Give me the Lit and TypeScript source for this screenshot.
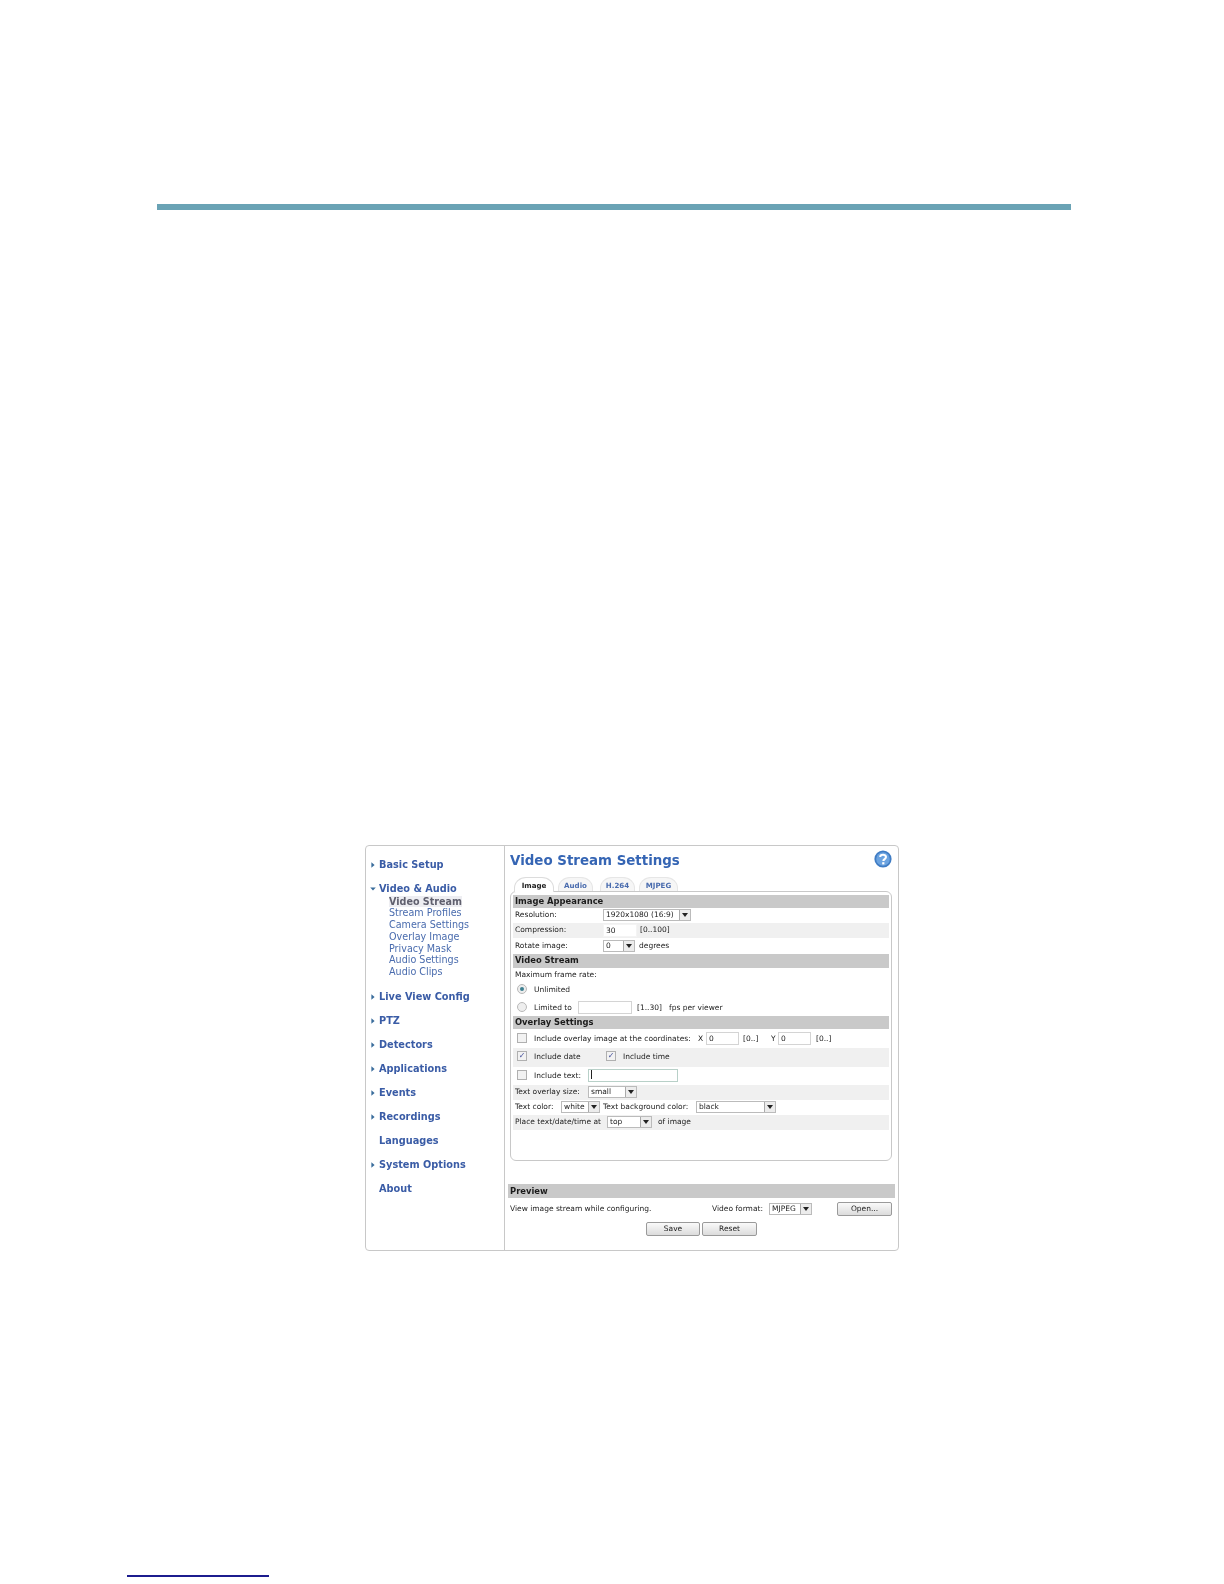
import { LitElement, html, css, nothing } from "lit";
import { customElement } from "lit/decorators.js";

@customElement("app-root")
export class AppRoot extends LitElement {
  static styles = css`
    :host { display: block; width: 1224px; height: 1584px; background: #fff; font-family: "DejaVu Sans", Verdana, sans-serif; color: #222; overflow: hidden; }
    .page { display: flex; flex-direction: column; padding-top: 204px; }
    .rule { width: 914px; height: 6px; margin-left: 157px; background: #6aa3b5; }
    .shot { width: 534px; height: 406px; box-sizing: border-box; margin: 635px 0 0 365px; border: 1px solid #c8c8c8; border-radius: 4px; display: flex; filter: blur(0.4px); }
    .foot { width: 142px; height: 1.5px; margin: 324px 0 0 127px; background: #1c1c8e; }

    .side { width: 138px; flex: none; border-right: 1px solid #c8c8c8; padding-top: 7px; display: flex; flex-direction: column; }
    .nav { height: 24px; flex: none; display: flex; align-items: center; font: bold 9.75px/14px "DejaVu Sans", sans-serif; color: #3a5ca6; padding-left: 5px; white-space: nowrap; }
    .ic { width: 8px; flex: none; display: flex; align-items: center; }
    .ar { fill: #3a6d9c; width: 4px; height: 6px; }
    .ard { fill: #3a6d9c; width: 6px; height: 4px; margin-left: -1px; flex: none; }
    .sub { display: flex; flex-direction: column; margin: -5.5px 0 6.5px 23px; }
    .sub div { height: 11.8px; font: 9.6px/12px "DejaVu Sans", sans-serif; color: #4a6cae; white-space: nowrap; width: fit-content; }
    .sub .on { color: #60606e; font-weight: bold; background: #eeeef2; }

    .main { flex: 1; min-width: 0; display: flex; flex-direction: column; }
    .head { height: 31px; display: flex; align-items: center; justify-content: space-between; padding: 0 6px 2px 5px; box-sizing: border-box; }
    h1 { margin: 0; font: bold 13.4px/18px "DejaVu Sans", sans-serif; color: #3565b4; }
    .help { width: 18px; height: 18px; margin-top: -3px; }
    .tabs { height: 14px; display: flex; padding-left: 9px; font: bold 7.1px/13px "DejaVu Sans", sans-serif; align-items: flex-end; }
    .tab { height: 14px; box-sizing: border-box; padding-top: 1px; border: 1px solid #e6e6e6; border-bottom: none; border-radius: 12px 12px 0 0 / 11px 11px 0 0; color: #4a6cae; background: #f6f6f6; text-align: center; flex: none; }
    .tab.on { color: #222; background: #fff; position: relative; z-index: 1; margin-bottom: -1px; height: 15px; border-color: #dcdcdc; }
    .box { width: 382px; height: 270px; margin-left: 5px; box-sizing: border-box; border: 1px solid #c8c8c8; border-radius: 6px; padding: 3px 2px 0; }
    .sec { background: #c9c9c9; font: bold 8.4px/13px "DejaVu Sans", sans-serif; color: #1c1c1c; padding-left: 2px; white-space: nowrap; }
    .row { display: flex; align-items: center; font: 7.5px/10px "DejaVu Sans", sans-serif; color: #222; padding-left: 2px; white-space: nowrap; box-sizing: border-box; }
    .g { background: #f0f0f0; }
    .t { flex: none; display: block; }
    .inp { height: 13px; box-sizing: border-box; border: 1px solid #d4d4d4; background: #fff; font: 7.5px/11px "DejaVu Sans", sans-serif; padding-left: 2px; color: #222; flex: none; }
    .inp.flat { border-color: #f4f4f4; }
    .caret { border-color: #b8d0c8; }
    .caret::before { content: ""; display: inline-block; width: 1px; height: 9px; background: #222; vertical-align: -1px; }
    .sel { height: 12px; box-sizing: border-box; border: 1px solid #bbb; background: #fff; display: flex; align-items: center; justify-content: space-between; font: 7.5px/10px "DejaVu Sans", sans-serif; padding-left: 2px; flex: none; color: #222; }
    .sel i { width: 10px; height: 10px; flex: none; border-left: 1px solid #aaa; background: #ececec; position: relative; }
    .sel i::after { content: ""; position: absolute; left: 2px; top: 3px; border: 3px solid transparent; border-top: 4px solid #222; border-bottom: none; }
    .cbw { width: 17px; flex: none; display: flex; margin-top: -2px; }
    .cb { width: 10px; height: 10px; box-sizing: border-box; border: 1px solid #b0b0b0; background: #f2f2f2; flex: none; font: 8px/8px "DejaVu Sans", sans-serif; color: #44509a; text-align: center; }
    .rd { width: 10px; height: 10px; box-sizing: border-box; border-radius: 50%; border: 1px solid #b8b8b8; background: #eee; flex: none; display: flex; align-items: center; justify-content: center; }
    .rd.on::after { content: ""; width: 4px; height: 4px; border-radius: 50%; background: #3e7f90; }
    .ind { padding-left: 4px; }
    .prev { margin: 23px 0 0 3px; width: 387px; }
    .prev .sec { height: 14px; line-height: 15px; padding-left: 2px; }
    .prow { height: 21px; display: flex; align-items: center; font: 7.5px/10px "DejaVu Sans", sans-serif; color: #222; padding: 1px 0 0 2px; box-sizing: border-box; white-space: nowrap; }
    .btn { height: 14px; box-sizing: border-box; border: 1px solid #9a9a9a; border-radius: 2px; background: linear-gradient(#fafafa, #dcdcdc); font: 7.5px/12px "DejaVu Sans", sans-serif; text-align: center; color: #222; flex: none; }
    .w54 { width: 54px; } .w55 { width: 55px; }
    .btns { display: flex; gap: 2px; margin: 3px 0 0 138px; }
  `;

  private nav(label: string, arrow: "r" | "d" | "" = "r") {
    const icon = arrow === "r"
      ? html`<svg class="ar" viewBox="0 0 5 7"><path d="M0.5 0 L4.5 3.5 L0.5 7Z" /></svg>`
      : arrow === "d"
        ? html`<svg class="ard" viewBox="0 0 7 5"><path d="M0 0.5 L7 0.5 L3.5 4.5Z" /></svg>`
        : nothing;
    return html`<div class="nav"><span class="ic">${icon}</span><span>${label}</span></div>`;
  }
  /* a text cell whose width reaches the start of the next item */
  private c(label: string, w: number) {
    return html`<span class="t" style="width:${w}px">${label}</span>`;
  }
  private sel(label: string, w: number) {
    return html`<span class="sel" style="width:${w}px">${label}<i></i></span>`;
  }
  private inp(label: string, w: number, cls = "") {
    return html`<span class="inp ${cls}" style="width:${w}px">${label}</span>`;
  }
  private cb(on = false) {
    return html`<span class="cbw"><span class="cb">${on ? "✓" : ""}</span></span>`;
  }
  private rd(on = false) {
    return html`<span class="cbw"><span class="rd ${on ? "on" : ""}"></span></span>`;
  }
  private h(px: number) {
    return `height:${px}px`;
  }

  render() {
    return html`<div class="page">
      <div class="rule"></div>
      <div class="shot">
        <div class="side">
          ${this.nav("Basic Setup")}
          ${this.nav("Video & Audio", "d")}
          <div class="sub">
            <div class="on">Video Stream</div>
            <div>Stream Profiles</div>
            <div>Camera Settings</div>
            <div>Overlay Image</div>
            <div>Privacy Mask</div>
            <div>Audio Settings</div>
            <div>Audio Clips</div>
          </div>
          ${this.nav("Live View Config")}
          ${this.nav("PTZ")}
          ${this.nav("Detectors")}
          ${this.nav("Applications")}
          ${this.nav("Events")}
          ${this.nav("Recordings")}
          ${this.nav("Languages", "")}
          ${this.nav("System Options")}
          ${this.nav("About", "")}
        </div>
        <div class="main">
          <div class="head">
            <h1>Video Stream Settings</h1>
            <svg class="help" viewBox="0 0 18 18">
              <circle cx="9" cy="9" r="8.6" fill="#3f7cc4" />
              <circle cx="9" cy="9" r="6.8" fill="#6ba3e0" />
              <path d="M6.2 7 C6.2 4.2 12 4 12 7.1 C12 9 9.3 9.2 9.3 11" fill="none" stroke="#fff" stroke-width="2" />
              <rect x="8.2" y="12.2" width="2.2" height="2.2" fill="#fff" />
            </svg>
          </div>
          <div class="tabs">
            <div class="tab on" style="width:40px;margin-right:4px">Image</div>
            <div class="tab" style="width:35px;margin-right:7px">Audio</div>
            <div class="tab" style="width:35px;margin-right:4px">H.264</div>
            <div class="tab" style="width:39px">MJPEG</div>
          </div>
          <div class="box">
            <div class="sec" style=${this.h(13)}>Image Appearance</div>
            <div class="row" style=${this.h(14.5)}>${this.c("Resolution:", 88)}${this.sel("1920x1080 (16:9)", 88)}</div>
            <div class="row g" style=${this.h(15.5)}>${this.c("Compression:", 88)}${this.inp("30", 34, "flat")}${this.c("", 3)}[0..100]</div>
            <div class="row" style=${this.h(16)}>${this.c("Rotate image:", 88)}${this.sel("0", 32)}${this.c("", 4)}degrees</div>
            <div class="sec" style=${this.h(14)}>Video Stream</div>
            <div class="row" style=${this.h(13)}>Maximum frame rate:</div>
            <div class="row ind" style=${this.h(18)}>${this.rd(true)}Unlimited</div>
            <div class="row ind" style=${this.h(17)}>${this.rd()}${this.c("Limited to", 44)}${this.inp("", 54)}${this.c("", 5)}${this.c("[1..30]", 32)}fps per viewer</div>
            <div class="sec" style=${this.h(13)}>Overlay Settings</div>
            <div class="row ind" style=${this.h(19)}>${this.cb()}${this.c("Include overlay image at the coordinates:", 164)}${this.c("X", 8)}${this.inp("0", 33)}${this.c("", 4)}${this.c("[0..]", 28)}${this.c("Y", 7)}${this.inp("0", 33)}${this.c("", 5)}[0..]</div>
            <div class="row ind g" style=${this.h(18.5)}>${this.cb(true)}${this.c("Include date", 72)}${this.cb(true)}Include time</div>
            <div class="row ind" style=${this.h(18)}>${this.cb()}${this.c("Include text:", 54)}${this.inp("", 90, "caret")}</div>
            <div class="row g" style=${this.h(15)}>${this.c("Text overlay size:", 73)}${this.sel("small", 49)}</div>
            <div class="row" style=${this.h(15)}>${this.c("Text color:", 46)}${this.sel("white", 39)}${this.c("", 3)}${this.c("Text background color:", 93)}${this.sel("black", 80)}</div>
            <div class="row g" style=${this.h(15)}>${this.c("Place text/date/time at", 92)}${this.sel("top", 45)}${this.c("", 6)}of image</div>
          </div>
          <div class="prev">
            <div class="sec">Preview</div>
            <div class="prow">${this.c("View image stream while configuring.", 202)}${this.c("Video format:", 57)}${this.sel("MJPEG", 43)}${this.c("", 25)}<span class="btn w55">Open...</span></div>
            <div class="btns"><span class="btn w54">Save</span><span class="btn w55">Reset</span></div>
          </div>
        </div>
      </div>
      <div class="foot"></div>
    </div>`;
  }
}
